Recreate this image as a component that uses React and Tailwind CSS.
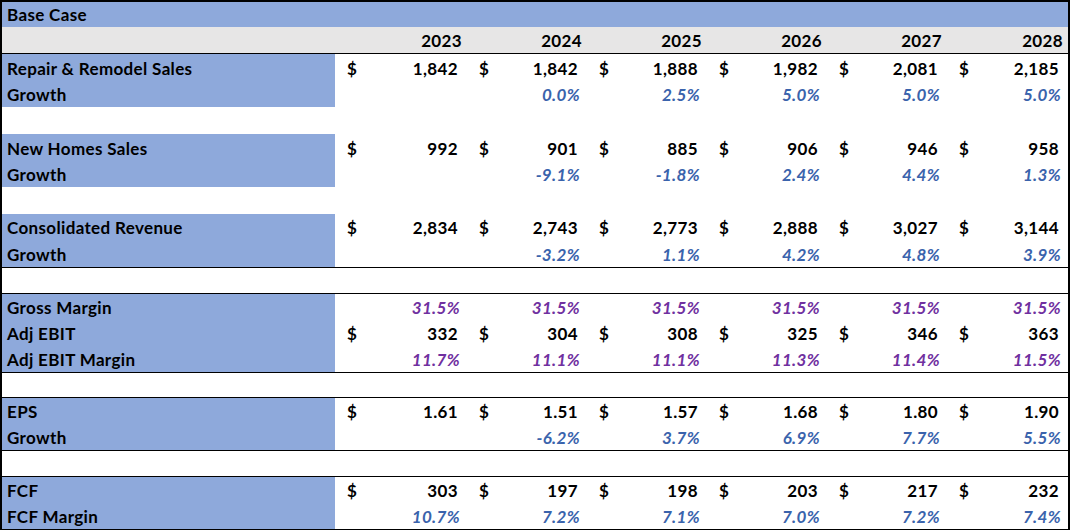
import React from 'react';

const YEARS = ['2023', '2024', '2025', '2026', '2027', '2028'];

// column widths for the six year columns
const COLS = 'grid grid-cols-[333px_132px_120px_120px_120px_120px_121px]';

const sections = [
  {
    rowH: 'h-[26.65px]',
    rows: [
      { label: 'Repair & Remodel Sales', kind: 'money', values: ['1,842', '1,842', '1,888', '1,982', '2,081', '2,185'] },
      { label: 'Growth', kind: 'pct', values: ['', '0.0%', '2.5%', '5.0%', '5.0%', '5.0%'] },
      { blank: true },
      { label: 'New Homes Sales', kind: 'money', values: ['992', '901', '885', '906', '946', '958'] },
      { label: 'Growth', kind: 'pct', values: ['', '-9.1%', '-1.8%', '2.4%', '4.4%', '1.3%'] },
      { blank: true },
      { label: 'Consolidated Revenue', kind: 'money', values: ['2,834', '2,743', '2,773', '2,888', '3,027', '3,144'] },
      { label: 'Growth', kind: 'pct', values: ['', '-3.2%', '1.1%', '4.2%', '4.8%', '3.9%'] },
    ],
  },
  {
    rowH: 'h-[26px]',
    rows: [
      { label: 'Gross Margin', kind: 'purple', values: ['31.5%', '31.5%', '31.5%', '31.5%', '31.5%', '31.5%'] },
      { label: 'Adj EBIT', kind: 'money', values: ['332', '304', '308', '325', '346', '363'] },
      { label: 'Adj EBIT Margin', kind: 'purple', values: ['11.7%', '11.1%', '11.1%', '11.3%', '11.4%', '11.5%'] },
    ],
  },
  {
    rowH: 'h-[26px]',
    rows: [
      { label: 'EPS', kind: 'money', values: ['1.61', '1.51', '1.57', '1.68', '1.80', '1.90'] },
      { label: 'Growth', kind: 'pct', values: ['', '-6.2%', '3.7%', '6.9%', '7.7%', '5.5%'] },
    ],
  },
  {
    rowH: 'h-[26px]',
    rows: [
      { label: 'FCF', kind: 'money', values: ['303', '197', '198', '203', '217', '232'] },
      { label: 'FCF Margin', kind: 'pct', values: ['10.7%', '7.2%', '7.1%', '7.0%', '7.2%', '7.4%'] },
    ],
  },
];

const Cell = ({ kind, value }) => {
  if (kind === 'money') {
    return (
      <div className="flex items-end justify-between pl-3 pr-[9px] pb-[4px] text-black">
        <span>$</span>
        <span>{value}</span>
      </div>
    );
  }
  const color = kind === 'purple' ? 'text-[#7030A0]' : 'text-[#3A63AC]';
  return (
    <div className={`flex items-end justify-end pr-[7px] pb-[4px] italic ${color}`}>
      {value}
    </div>
  );
};

const Row = ({ row, rowH }) => {
  if (row.blank) return <div className={`${rowH} bg-white`} />;
  return (
    <div className={`${COLS} ${rowH}`}>
      <div className="flex items-end bg-[#8EA9DB] pl-[5px] pb-[4px] text-black">{row.label}</div>
      {row.values.map((v, i) => (
        <Cell key={i} kind={row.kind} value={v} />
      ))}
    </div>
  );
};

const App = () => {
  return (
    <div className="w-[1072px] h-[530px] bg-white">
      <div className="w-[1070px] border-x-2 border-t-2 border-b border-black bg-white font-['Lato','Liberation_Sans',sans-serif] text-[17px] font-bold leading-none tracking-[0.35px] text-black">
        {/* Title */}
        <div className="flex h-[25px] items-end bg-[#8EA9DB] pl-[5px] pb-[4px]">Base Case</div>

        {/* Years */}
        <div className={`${COLS} h-[26px] bg-[#E7E6E6]`}>
          <div />
          {YEARS.map((y) => (
            <div key={y} className="flex items-end justify-end pr-[5px] pb-[4px]">{y}</div>
          ))}
        </div>

        {sections.map((s, si) => (
          <React.Fragment key={si}>
            {si > 0 && <div className="h-[25.5px] border-t border-black bg-white" />}
            <div className="border-t border-black">
              {s.rows.map((r, ri) => (
                <Row key={ri} row={r} rowH={s.rowH} />
              ))}
            </div>
          </React.Fragment>
        ))}
      </div>
    </div>
  );
};

export default App;
